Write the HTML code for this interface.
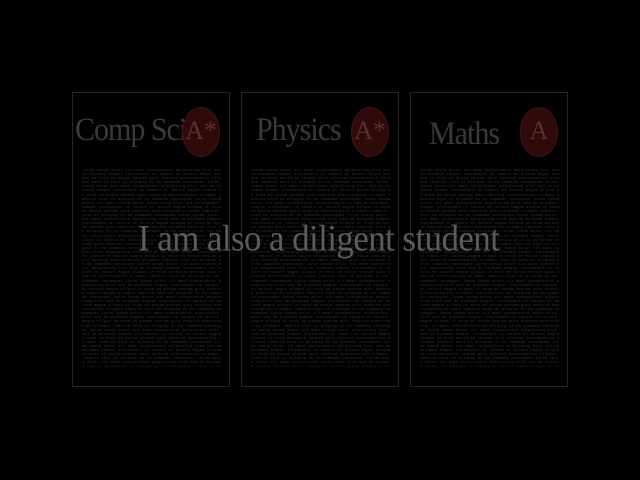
<!DOCTYPE html>
<html><head><style>
body{margin:0;background:#000;width:640px;height:480px;overflow:hidden;position:relative;font-family:"Liberation Serif",serif}
.card{position:absolute;top:92px;width:158px;height:295px;border:1px solid #262626;box-sizing:border-box}
.t{position:absolute;top:20px;left:2px;font-size:30px;color:#3a3a3a;letter-spacing:-1px;white-space:nowrap;transform:scaleY(1.1)}
.c{position:absolute;top:14px;right:9px;width:36px;height:48px;border-radius:50%;background:#2e0a0a;border:1px solid #441414;color:#5a3030;font-size:26px;text-align:center;line-height:46px}
.p{position:absolute;top:76px;left:9px;width:140px;height:198px;overflow:hidden;font-size:4px;line-height:4.1px;color:#303030;word-break:break-all;font-family:"Liberation Mono",monospace}
.m{position:absolute;top:219px;left:138px;font-size:35px;color:#5c5c5c;white-space:nowrap;letter-spacing:-0.6px;transform:scaleY(1.05)}
</style></head><body>
<div class="card" style="left:72px"><div class="t">Comp Sci</div><div class="c">A*</div><div class="p" id="p1"></div></div>
<div class="card" style="left:241px"><div class="t" style="left:14px">Physics</div><div class="c">A*</div><div class="p" id="p2"></div></div>
<div class="card" style="left:410px"><div class="t" style="left:18px;top:24px">Maths</div><div class="c">A</div><div class="p" id="p3"></div></div>
<div class="m">I am also a diligent student</div>
<script>
var s="lorem ipsum dolor sit amet consectetur adipiscing elit sed do eiusmod tempor incididunt ut labore et dolore magna aliqua ut enim ad minim veniam quis nostrud exercitation ullamco laboris nisi ut aliquip ex ea commodo consequat ";
var t="";for(var i=0;i<20;i++)t+=s;
["p1","p2","p3"].forEach(function(id){document.getElementById(id).textContent=t;});
</script>
</body></html>
